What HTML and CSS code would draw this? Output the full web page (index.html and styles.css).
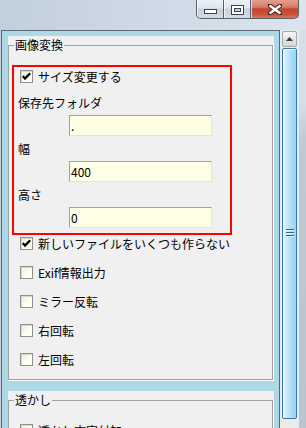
FILE: index.html
```html
<!DOCTYPE html>
<html lang="ja">
<head>
    <meta charset="utf-8">
    <meta name="viewport" content="width=device-width, initial-scale=1">
    <title>画像変換</title>
    <link rel="stylesheet" href="styles.css">
</head>
<body>
    <header class="titlebar">
        <div class="caption">
            <span class="caption__btn caption__btn--min">
                <svg width="13" height="5" viewBox="0 0 13 5"><rect x="0.5" y="0.5" width="12" height="4" fill="#fff" stroke="#3b4552"/></svg>
            </span>
            <span class="caption__btn caption__btn--max">
                <svg width="13" height="10" viewBox="0 0 13 10"><rect x="0.5" y="0.5" width="12" height="9" fill="#fff" stroke="#3b4552"/><rect x="3.5" y="3.5" width="6" height="3" fill="#c9d3de" stroke="#3b4552"/></svg>
            </span>
            <span class="caption__btn caption__btn--close">
                <svg width="14" height="11" viewBox="0 0 14 11"><path d="M1 1 L13 10 M13 1 L1 10" stroke="#4a2420" stroke-width="4.4" stroke-linecap="square"/><path d="M1.5 1.5 L12.5 9.5 M12.5 1.5 L1.5 9.5" stroke="#fff" stroke-width="2.4"/></svg>
            </span>
        </div>
    </header>

    <div class="client">
        <main class="scroll-panel">

            <section class="panel">
                <fieldset class="group">
                    <legend class="group__title">画像変換</legend>

                    <div class="highlight">
                        <label class="check check--inner">
                            <span class="check__box"><svg width="11" height="11" viewBox="0 0 11 11"><path d="M1.8 5 L4 7.6 L9.2 2.2" fill="none" stroke="#000" stroke-width="2.2"/></svg></span>
                            サイズ変更する
                        </label>

                        <div class="field field--first">
                            <div class="field__label">保存先フォルダ</div>
                            <input class="field__input" type="text" value="." readonly>
                        </div>
                        <div class="field">
                            <div class="field__label">幅</div>
                            <input class="field__input" type="text" value="400" readonly>
                        </div>
                        <div class="field">
                            <div class="field__label">高さ</div>
                            <input class="field__input" type="text" value="0" readonly>
                        </div>
                    </div>

                    <label class="check check--outer check--first">
                        <span class="check__box"><svg width="11" height="11" viewBox="0 0 11 11"><path d="M1.8 5 L4 7.6 L9.2 2.2" fill="none" stroke="#000" stroke-width="2.2"/></svg></span>
                        新しいファイルをいくつも作らない
                    </label>
                    <label class="check check--outer"><span class="check__box"></span>Exif情報出力</label>
                    <label class="check check--outer"><span class="check__box"></span>ミラー反転</label>
                    <label class="check check--outer"><span class="check__box"></span>右回転</label>
                    <label class="check check--outer"><span class="check__box"></span>左回転</label>
                </fieldset>
            </section>

            <section class="panel">
                <fieldset class="group">
                    <legend class="group__title">透かし</legend>
                    <label class="check check--outer check--top"><span class="check__box"></span>透かし文字付加</label>
                </fieldset>
            </section>

        </main>

        <div class="scrollbar">
            <div class="scrollbar__up">
                <svg width="7" height="4" viewBox="0 0 7 4"><path d="M0 4 L3.5 0 L7 4 Z" fill="#3a3a3a"/></svg>
            </div>
            <div class="scrollbar__thumb">
                <svg width="8" height="9" viewBox="0 0 8 9"><path d="M0 0.5 H8 M0 3.5 H8 M0 6.5 H8" stroke="#2f5f86" stroke-width="1"/><path d="M0 1.5 H8 M0 4.5 H8 M0 7.5 H8" stroke="#e8f6ff" stroke-width="1"/></svg>
            </div>
        </div>

        <div class="frame-right"></div>
    </div>
</body>
</html>
```

FILE: styles.css
```css
* {
    box-sizing: border-box;
}

html,
body {
    margin: 0;
}

body {
    width: 306px;
    height: 428px;
    overflow: hidden;
    background-color: #c7d2de;
    font-family: "Noto Sans CJK JP", "Noto Sans", sans-serif;
    font-size: 12px;
    color: #000;
}

/* title bar */
.titlebar {
    height: 30px;
    display: flex;
    justify-content: flex-end;
    padding-right: 7px;
    background: linear-gradient(to right, #c2cfdd, #d4dee9 70%, #dbe4ee);
}
.caption {
    display: flex;
    height: 19px;
}
.caption__btn {
    display: flex;
    align-items: center;
    justify-content: center;
    height: 19px;
    border-right: 1px solid #56616e;
    border-bottom: 1px solid #56616e;
    background: linear-gradient(#edf1f6 0%, #dfe6ee 45%, #c7d1dc 50%, #d3dce6 100%);
    box-shadow: inset 1px 0 0 rgba(255, 255, 255, 0.7);
}
.caption__btn--min {
    width: 28px;
    border-left: 1px solid #56616e;
    border-bottom-left-radius: 5px;
    padding-top: 4px;
}
.caption__btn--max {
    width: 27px;
    padding-top: 1px;
}
.caption__btn--close {
    width: 48px;
    border-bottom-right-radius: 5px;
    background: linear-gradient(#e6a08f 0%, #d77a64 40%, #c24530 50%, #c9533b 80%, #d8765a 100%);
}

/* client area */
.client {
    display: flex;
    height: 398px;
}
.scroll-panel {
    width: 279px;
    margin-left: 1px;
    padding: 5px 5px 0 6px;
    background-color: #add8e6;
    border: 1px solid #5d6875;
    border-bottom: none;
}

.panel {
    background-color: #f0f0f0;
    padding: 3px 0 1px 0;
    margin-bottom: 10px;
}
.group {
    margin: 0 1px 0 0;
    padding: 0 0 12px 0;
    min-width: 0;
    border: 1px solid #a0a0a0;
    box-shadow: 1px 1px 0 #fff;
}
.group__title {
    margin-left: 5px;
    padding: 0 1px;
    line-height: 12px;
    font-size: 12px;
}

.highlight {
    width: 220px;
    margin: 14px 0 0 3px;
    padding-bottom: 5px;
    border: 2px solid #ff0000;
}

.check {
    display: flex;
    align-items: center;
    gap: 5px;
    white-space: nowrap;
}
.check--inner {
    height: 18px;
    padding-left: 6px;
}
.check--outer {
    height: 16px;
    margin-top: 13px;
    padding-left: 11px;
}
.check--first {
    margin-top: 0;
}
.check--top {
    margin-top: 16px;
}
.check__box {
    flex: none;
    display: flex;
    width: 13px;
    height: 13px;
    border: 1px solid #8e8f8f;
    background: linear-gradient(135deg, #e9e9dc, #fffff2 60%);
    box-shadow: inset 1px 1px 0 #d8d8cc;
}

.field {
    margin-top: 7px;
}
.field--first {
    margin-top: 12px;
}
.field__label {
    line-height: 12px;
    padding-left: 4px;
}
.field__input {
    display: block;
    width: 143px;
    height: 21px;
    margin: 6px 0 0 55px;
    padding: 0 0 0 1px;
    border: 1px solid;
    border-color: #a0a0a0 #e3e3e3 #e3e3e3 #a0a0a0;
    background-color: #ffffe6;
    font-family: "Noto Sans CJK JP", "Noto Sans", sans-serif;
    font-size: 12px;
    color: #000;
    outline: none;
}

/* scrollbar */
.scrollbar {
    width: 19px;
    padding: 1px 2px 0 2px;
    background-color: #ebebeb;
}
.scrollbar__up {
    display: flex;
    align-items: center;
    justify-content: center;
    height: 16px;
    border: 1px solid #a3a8ad;
    border-radius: 2px;
    background: linear-gradient(#f7f7f7, #e4e4e4 50%, #d6d6d6);
}
.scrollbar__thumb {
    display: flex;
    align-items: center;
    justify-content: center;
    height: 371px;
    margin-top: 1px;
    border: 1px solid #3c78a6;
    border-radius: 2px;
    background: linear-gradient(to right, #e6f5fd 0%, #c6e7f8 35%, #abdcf6 65%, #9dd3f1 100%);
    box-shadow: inset 1px 1px 0 #f3fbff;
}

.frame-right {
    width: 7px;
    background: linear-gradient(#d6e0ea 70px, #c0cad5 110px, #bac4cf);
}
```
